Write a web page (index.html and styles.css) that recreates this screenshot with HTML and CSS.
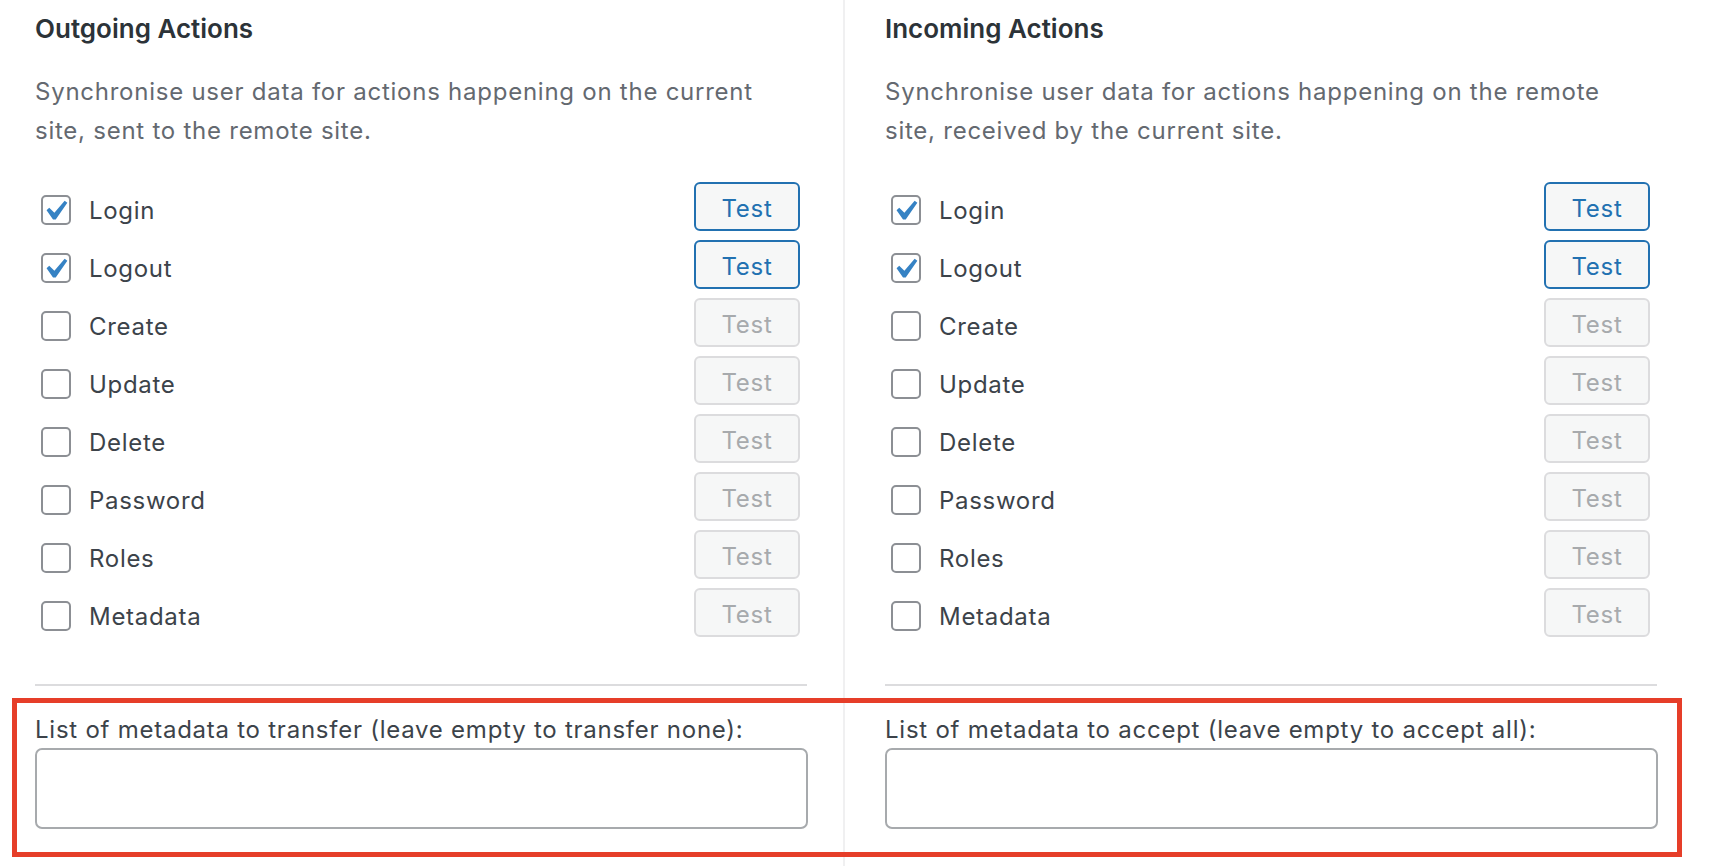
FILE: index.html
```html
<!DOCTYPE html>
<html lang="en">
<head>
    <meta charset="UTF-8">
    <meta name="viewport" content="width=device-width, initial-scale=1.0">
    <title>User Sync Actions</title>
    <link rel="stylesheet" href="styles.css">
</head>
<body>

<div class="panels">
    <!-- Outgoing -->
    <div class="column column-left">
        <h2>Outgoing Actions</h2>
        <p class="description">Synchronise user data for actions happening on the current site, sent to the remote site.</p>

        <div class="action-list">
            <div class="action-row">
                <span class="checkbox checked"><svg viewBox="4 3 13 13" width="26" height="26"><path d="M14.83 4.89l1.34.94-5.81 8.38H9.02L5.78 9.67l1.34-1.25 2.57 2.4z"/></svg></span>
                <span class="action-name">Login</span>
                <button class="test-button">Test</button>
            </div>
            <div class="action-row">
                <span class="checkbox checked"><svg viewBox="4 3 13 13" width="26" height="26"><path d="M14.83 4.89l1.34.94-5.81 8.38H9.02L5.78 9.67l1.34-1.25 2.57 2.4z"/></svg></span>
                <span class="action-name">Logout</span>
                <button class="test-button">Test</button>
            </div>
            <div class="action-row">
                <span class="checkbox"></span>
                <span class="action-name">Create</span>
                <button class="test-button" disabled>Test</button>
            </div>
            <div class="action-row">
                <span class="checkbox"></span>
                <span class="action-name">Update</span>
                <button class="test-button" disabled>Test</button>
            </div>
            <div class="action-row">
                <span class="checkbox"></span>
                <span class="action-name">Delete</span>
                <button class="test-button" disabled>Test</button>
            </div>
            <div class="action-row">
                <span class="checkbox"></span>
                <span class="action-name">Password</span>
                <button class="test-button" disabled>Test</button>
            </div>
            <div class="action-row">
                <span class="checkbox"></span>
                <span class="action-name">Roles</span>
                <button class="test-button" disabled>Test</button>
            </div>
            <div class="action-row">
                <span class="checkbox"></span>
                <span class="action-name">Metadata</span>
                <button class="test-button" disabled>Test</button>
            </div>
        </div>

        <hr>

        <label for="outgoing-meta">List of metadata to transfer (leave empty to transfer none):</label>
        <textarea id="outgoing-meta"></textarea>
    </div>

    <!-- Incoming -->
    <div class="column column-right">
        <h2>Incoming Actions</h2>
        <p class="description">Synchronise user data for actions happening on the remote site, received by the current site.</p>

        <div class="action-list">
            <div class="action-row">
                <span class="checkbox checked"><svg viewBox="4 3 13 13" width="26" height="26"><path d="M14.83 4.89l1.34.94-5.81 8.38H9.02L5.78 9.67l1.34-1.25 2.57 2.4z"/></svg></span>
                <span class="action-name">Login</span>
                <button class="test-button">Test</button>
            </div>
            <div class="action-row">
                <span class="checkbox checked"><svg viewBox="4 3 13 13" width="26" height="26"><path d="M14.83 4.89l1.34.94-5.81 8.38H9.02L5.78 9.67l1.34-1.25 2.57 2.4z"/></svg></span>
                <span class="action-name">Logout</span>
                <button class="test-button">Test</button>
            </div>
            <div class="action-row">
                <span class="checkbox"></span>
                <span class="action-name">Create</span>
                <button class="test-button" disabled>Test</button>
            </div>
            <div class="action-row">
                <span class="checkbox"></span>
                <span class="action-name">Update</span>
                <button class="test-button" disabled>Test</button>
            </div>
            <div class="action-row">
                <span class="checkbox"></span>
                <span class="action-name">Delete</span>
                <button class="test-button" disabled>Test</button>
            </div>
            <div class="action-row">
                <span class="checkbox"></span>
                <span class="action-name">Password</span>
                <button class="test-button" disabled>Test</button>
            </div>
            <div class="action-row">
                <span class="checkbox"></span>
                <span class="action-name">Roles</span>
                <button class="test-button" disabled>Test</button>
            </div>
            <div class="action-row">
                <span class="checkbox"></span>
                <span class="action-name">Metadata</span>
                <button class="test-button" disabled>Test</button>
            </div>
        </div>

        <hr>

        <label for="incoming-meta">List of metadata to accept (leave empty to accept all):</label>
        <textarea id="incoming-meta"></textarea>
    </div>
</div>

<!-- Highlight round the metadata fields -->
<div class="highlight"></div>

</body>
</html>
```

FILE: styles.css
```css
body {
    font-family: Inter, "Noto Sans", sans-serif;
    color: #3c434a;
    background-color: #fff;
    margin: 0;
    padding: 0;
    height: 866px;
    overflow: hidden;
}
.panels {
    display: flex;
    align-items: stretch;
    height: 866px;
}
.column {
    width: 772px;
    padding-top: 12px;
}
.column-left {
    padding-left: 35px;
    padding-right: 36px;
    border-right: 2px solid #f0f0f1;
}
.column-right {
    padding-left: 40px;
}
h2 {
    font-size: 26px;
    font-weight: 600;
    line-height: 34px;
    color: #2c3338;
    margin: 0 0 26px 0;
}
.description {
    font-size: 24px;
    line-height: 39px;
    letter-spacing: 0.75px;
    color: #646970;
    margin: 0 0 32px 0;
}
.action-row {
    display: flex;
    align-items: center;
    height: 58px;
}
.checkbox {
    width: 26px;
    height: 26px;
    border: 2px solid #8c8f94;
    border-radius: 5px;
    margin: 0 18px 3px 6px;
    display: flex;
    align-items: center;
    justify-content: center;
    flex-shrink: 0;
}
.checkbox svg {
    fill: #3582c4;
}
.action-name {
    font-size: 24px;
    line-height: 30px;
    letter-spacing: 0.7px;
    flex: 1;
}
.test-button {
    align-self: flex-start;
    width: 106px;
    height: 49px;
    margin-right: 7px;
    padding: 3px 0 0 0;
    font-family: Inter, "Noto Sans", sans-serif;
    font-size: 24px;
    letter-spacing: 0.7px;
    color: #2271b1;
    background-color: #f6f7f7;
    border: 2px solid #2271b1;
    border-radius: 6px;
    cursor: pointer;
}
.test-button:disabled {
    color: #a7aaad;
    border-color: #dcdcde;
    cursor: default;
}
hr {
    border: none;
    border-top: 2px solid #dcdcde;
    margin: 38px 0 29px 0;
}
label {
    display: block;
    font-size: 24px;
    line-height: 30px;
    letter-spacing: 0.75px;
    margin-bottom: 3px;
}
textarea {
    display: block;
    box-sizing: border-box;
    width: 773px;
    height: 81px;
    border: 2px solid #a7aaad;
    border-radius: 7px;
    resize: none;
}
.highlight {
    position: absolute;
    left: 12px;
    top: 698px;
    width: 1660px;
    height: 149px;
    border: 5px solid #e63e29;
    pointer-events: none;
}
```
